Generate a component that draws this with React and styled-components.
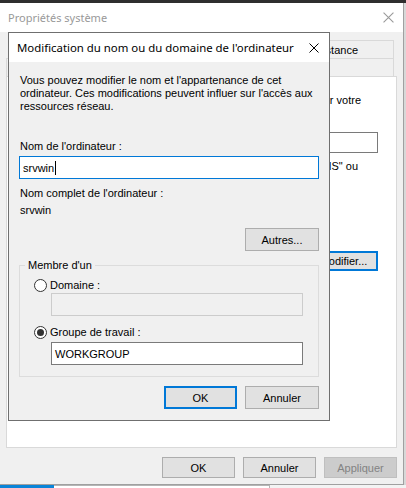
import React from 'react'
import styled, { createGlobalStyle } from 'styled-components'

const Global = createGlobalStyle`
*{box-sizing:border-box;}
html,body{margin:0;padding:0;background:#e6e6e6;}
body{font-family:"Liberation Sans",Arial,sans-serif;font-size:11px;color:#000;}
`

const CloseIcon = ({ size = 10, color = '#000' }) => (
  <svg width={size} height={size} viewBox="0 0 10 10">
    <path d="M0.5 0.5L9.5 9.5M9.5 0.5L0.5 9.5" stroke={color} strokeWidth="1" fill="none" />
  </svg>
)

function App() {
  return (
    <Desktop>
      <Global />
      <TopStrip />
      <Window>
        <TitleBar>
          <WinTitle>Propriétés système</WinTitle>
          <CloseIcon size={11} color="#9a9a9a" />
        </TitleBar>
        <WinBody>
          <TabRow $left={25}>
            <Tab />
            <Tab $end>Utilisation à distance</Tab>
          </TabRow>
          <TabRow $left={1}>
            <Tab $width={110} />
            <Tab $width={60} />
            <Tab />
          </TabRow>
          <Panel>
            <Line $top={0} $right={35}>identifier votre</Line>
            <FieldRow>
              <Field $width={160} $height={21} />
            </FieldRow>
            <Line $top={7} $right={38}>"Serveur IIS" ou</Line>
            <ModifyRow>
              <Button $primary $width={69} $height={20}>Modifier...</Button>
            </ModifyRow>
          </Panel>
          <ButtonRow>
            <Button $width={73} $height={21}>OK</Button>
            <Button $width={73} $height={21}>Annuler</Button>
            <Button $disabled $width={73} $height={21}>Appliquer</Button>
          </ButtonRow>
        </WinBody>
      </Window>
      <BottomStrip>
        <TaskItem />
        <TaskPane />
      </BottomStrip>

      <Dialog>
        <DialogTitle>
          <span>Modification du nom ou du domaine de l'ordinateur</span>
          <CloseIcon />
        </DialogTitle>
        <DialogBody>
          <Text>
            Vous pouvez modifier le nom et l'appartenance de cet<br />
            ordinateur. Ces modifications peuvent influer sur l'accès aux<br />
            ressources réseau.
          </Text>
          <Text $top={27}>Nom de l'ordinateur :</Text>
          <Field $focused $top={3}>
            srvwin<Caret />
          </Field>
          <Text $top={8}>Nom complet de l'ordinateur :</Text>
          <Text $top={4}>srvwin</Text>
          <RightRow $top={11}>
            <Button $width={74}>Autres...</Button>
          </RightRow>
          <Group>
            <Legend>Membre d'un</Legend>
            <Radio>
              <Dot />
              Domaine :
            </Radio>
            <Field $disabled $indent={31} $right={15} $top={1} />
            <Radio $top={9}>
              <Dot $checked />
              Groupe de travail :
            </Radio>
            <Field $indent={31} $right={15} $top={3}>WORKGROUP</Field>
          </Group>
          <RightRow $top={9} $gap={8}>
            <Button $primary $width={73}>OK</Button>
            <Button $width={74}>Annuler</Button>
          </RightRow>
        </DialogBody>
      </Dialog>
    </Desktop>
  )
}

const Desktop = styled.div`
position:relative;
width:406px;
height:488px;
overflow:hidden;
display:flex;
flex-direction:column;
background:#d8d8d8;
`

const TopStrip = styled.div`
height:3px;
background:#2e2e2e;
`

const Window = styled.div`
width:404px;
height:482px;
background:#f0f0f0;
border-right:1px solid #a0a0a0;
border-bottom:1px solid #a0a0a0;
display:flex;
flex-direction:column;
`

const TitleBar = styled.div`
height:29px;
background:#fff;
display:flex;
align-items:center;
justify-content:space-between;
padding:0 9px 0 8px;
`

const WinTitle = styled.span`
font-family:"Noto Sans","Open Sans",sans-serif;
font-size:11px;
color:#999;
`

const WinBody = styled.div`
flex:1;
display:flex;
flex-direction:column;
padding:8px 6px 0 6px;
`

const TabRow = styled.div`
display:flex;
height:18px;
margin:0 3px 0 ${p => p.$left}px;
`

const Tab = styled.div`
flex:${p => (p.$width ? `0 0 ${p.$width}px` : '1 1 0')};
border:1px solid #d9d9d9;
border-bottom:none;
margin-left:-1px;
background:#f0f0f0;
display:flex;
align-items:center;
justify-content:${p => (p.$end ? 'flex-end' : 'center')};
padding-right:${p => (p.$end ? 35 : 0)}px;
white-space:nowrap;
overflow:hidden;
`

const Panel = styled.div`
height:372px;
background:#fff;
border:1px solid #d9d9d9;
padding:17px 18px 0 0;
display:flex;
flex-direction:column;
`

const Line = styled.div`
margin-top:${p => p.$top}px;
padding-right:${p => p.$right - 18}px;
line-height:13px;
text-align:right;
white-space:nowrap;
`

const FieldRow = styled.div`
display:flex;
justify-content:flex-end;
margin-top:25px;
`

const ModifyRow = styled.div`
display:flex;
justify-content:flex-end;
margin-top:78px;
`

const ButtonRow = styled.div`
display:flex;
justify-content:flex-end;
gap:8px;
margin-top:9px;
`

const BottomStrip = styled.div`
flex:1;
display:flex;
background:#f3f3f3;
`

const TaskItem = styled.div`
width:54px;
background:#0a84d8;
`

const TaskPane = styled.div`
width:216px;
border-top:1px solid #b5b5b5;
border-right:1px solid #b5b5b5;
background:#fff;
`

const Button = styled.div`
width:${p => p.$width}px;
height:${p => p.$height || 23}px;
display:flex;
align-items:center;
justify-content:center;
white-space:nowrap;
background:${p => (p.$disabled ? '#cccccc' : '#e1e1e1')};
color:${p => (p.$disabled ? '#838383' : '#000')};
border:${p => (p.$primary ? '2px solid #0078d7' : `1px solid ${p.$disabled ? '#bfbfbf' : '#adadad'}`)};
`

const Dialog = styled.div`
position:absolute;
left:8px;
top:32px;
width:322px;
background:#f0f0f0;
border:1px solid #6f6f6f;
display:flex;
flex-direction:column;
`

const DialogTitle = styled.div`
height:29px;
background:#fff;
display:flex;
align-items:center;
justify-content:space-between;
padding:0 10px 0 8px;
font-family:"Noto Sans","Open Sans",sans-serif;
font-size:11.4px;
color:#000;
`

const DialogBody = styled.div`
padding:12px 10px 11px 10px;
display:flex;
flex-direction:column;
`

const Text = styled.div`
line-height:13px;
margin-top:${p => p.$top || 0}px;
padding-left:1px;
white-space:nowrap;
`

const Field = styled.div`
height:${p => p.$height || 23}px;
width:${p => (p.$width ? `${p.$width}px` : 'auto')};
margin:${p => p.$top || 0}px ${p => p.$right || 0}px 0 ${p => p.$indent || 0}px;
background:${p => (p.$disabled ? '#f0f0f0' : '#fff')};
border:1px solid ${p => (p.$focused ? '#0078d7' : p.$disabled ? '#cccccc' : '#7a7a7a')};
display:flex;
align-items:center;
padding-left:3px;
`

const Caret = styled.span`
display:inline-block;
width:1px;
height:14px;
background:#000;
margin-left:1px;
`

const RightRow = styled.div`
display:flex;
justify-content:flex-end;
gap:${p => p.$gap || 0}px;
margin-top:${p => p.$top || 0}px;
`

const Group = styled.fieldset`
margin:8px 0 0 0;
padding:6px 0 11px 0;
border:1px solid #dcdcdc;
display:flex;
flex-direction:column;
`

const Legend = styled.legend`
margin-left:5px;
padding:0 3px;
line-height:13px;
`

const Radio = styled.div`
display:flex;
align-items:center;
gap:3px;
height:14px;
margin:${p => p.$top || 0}px 0 0 14px;
`

const Dot = styled.span`
width:13px;
height:13px;
border-radius:50%;
border:1px solid #333;
background:#fff;
display:flex;
align-items:center;
justify-content:center;
&::after{
  content:"";
  width:7px;
  height:7px;
  border-radius:50%;
  background:${p => (p.$checked ? '#333' : 'transparent')};
}
`

export default App
